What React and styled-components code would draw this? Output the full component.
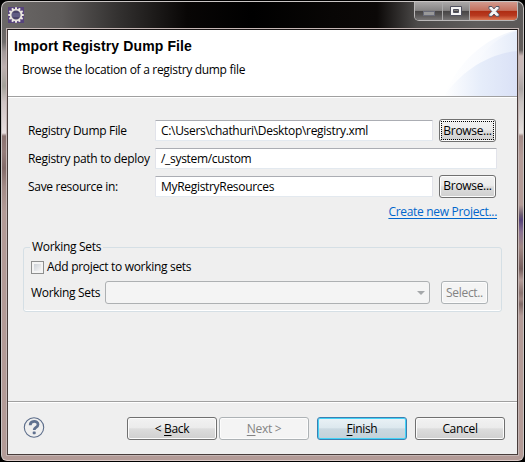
import React from 'react';
import styled, { createGlobalStyle, css } from 'styled-components';

const Global = createGlobalStyle`
  * { box-sizing: border-box; }
  html, body { margin: 0; background: #000; overflow: hidden; }
  body { font: 12px/16px "Open Sans", "Noto Sans", sans-serif; color: #000; }
  button, input { font: inherit; }
`;

const T = styled.span`
  display: inline-block;
  white-space: pre;
  letter-spacing: ${p => (p.$ls === undefined ? -0.31 : p.$ls)}px;
  u { text-decoration: underline; text-underline-offset: 2px; text-decoration-thickness: 1px; }
`;

const Frame = styled.div`
  width: 523px;
  height: 460px;
  margin-top: 1px;
  margin-left: 1px;
  padding: 0 5px 5px;
  display: flex;
  flex-direction: column;
  border: 1px solid #c9c5c4;
  border-bottom-color: #dccbc8;
  border-radius: 7px 7px 6px 6px;
  background:
    linear-gradient(90deg, #6b6867 0, #5d5a59 60px, #343231 115px, #080605 185px, #000 250px, #080605 330px, #0b0807 375px, #4c4a49 415px, #605d5c 475px, #5c5958 524px) 0 0 / 100% 28px no-repeat,
    linear-gradient(180deg, #5c5958 0, #6f6b6a 40px, #a39a9a 50px, #bdb0b0 65px, #a3a199 84px, #cfc4c4 100px, #e8dfdf 131px, #8b7371 134px, #957d7a 150px, #836b69 166px, #a38b87 185px, #b39b97 210px) 0 0 / 8px 100% no-repeat,
    linear-gradient(180deg, #5c5958 0, #625d5b 48px, #cbb8b6 54px, #c4b8b8 70px, #a9a3a2 87px, #c8c2c0 100px, #e4dedc 131px, #a38b87 134px, #b39b97 155px, #b39b97 203px, #6a5a70 213px, #56437a 218px, #8a7292 230px, #a08783 245px, #755e5d 267px, #b39b97 278px, #8a7370 291px, #a08783 297px, #7f6966 302px, #b39b97 314px);
`;

const TitleBar = styled.header`
  height: 27px;
  flex: none;
  display: flex;
  justify-content: space-between;
  align-items: flex-start;
  svg { display: block; }
`;

const AppIcon = styled.svg`
  margin: 5px 0 0 1px;
`;

const Controls = styled.div`
  display: flex;
  height: 19px;
  border: 1px solid #bab8b8;
  border-top: 0;
  border-radius: 0 0 5px 5px;
  overflow: hidden;
`;

const Control = styled.div`
  width: ${p => p.$w}px;
  display: grid;
  place-items: center;
  padding-top: ${p => p.$drop || 0}px;
  border-right: ${p => (p.$close ? 0 : 1)}px solid #aaa;
  background: ${p => p.$close
    ? 'linear-gradient(#d29a8e 0, #c4705d 47%, #ae2b12 50%, #b83a20 75%, #dd7955 100%)'
    : 'linear-gradient(#aaa8a8 0, #868484 47%, #474545 50%, #555353 70%, #777575 100%)'};
`;

const Client = styled.main`
  flex: 1;
  min-height: 0;
  display: flex;
  flex-direction: column;
  border: 1px solid #493d3b;
  border-top-color: #171313;
  outline: 1px solid #c4b6b4;
  background: #efefef;
`;

const Banner = styled.section`
  position: relative;
  height: 67px;
  flex: none;
  background: #fff;
  border-bottom: 1px solid #a0a0a0;
  box-shadow: 0 1px #fff;
  padding: 8px 0 0 6px;
`;

const Swoosh = styled.svg`
  position: absolute;
  right: 0;
  top: 0;
`;

const Title = styled.h1`
  margin: 0;
  font: bold 14px/16px "Liberation Sans", Arial, sans-serif;
`;

const Subtitle = styled.p`
  margin: 8px 0 0 8px;
`;

const Form = styled.section`
  display: grid;
  grid-template-columns: 127px 278px 57px;
  grid-template-rows: 28px 28px 28px 22px;
  align-items: center;
  margin: 19px 0 0 20px;
`;

const FormLabel = styled.label`
  padding-top: 1px;
`;

const Field = styled.div`
  height: 21px;
  display: flex;
  align-items: center;
  padding: 1px 0 0 5px;
  background: #fff;
  border: 1px solid #e2e3ea;
  border-top-color: #abadb3;
  border-bottom-color: #e3e9ef;
  border-radius: 1px;
  ${p => p.$wide && css`grid-column: 2 / 4; margin-right: -7px;`}
`;

const Button = styled.button`
  width: ${p => p.$w}px;
  height: 23px;
  padding: 0;
  display: grid;
  place-items: center;
  color: #000;
  border: 1px solid #707070;
  border-radius: 3px;
  background: linear-gradient(#f2f2f2 0, #ebebeb 48%, #dddddd 51%, #cfcfcf 100%);
  box-shadow: inset 0 0 0 1px #fcfcfc;
  ${p => p.$primary && css`
    border-color: #3c7fb1;
    background: linear-gradient(#eaf2f6 0, #dce8ee 48%, #cbd9e1 51%, #c3d1d9 100%);
    box-shadow: inset 0 0 0 1px #43d3f7;
  `}
  &:disabled { color: #838383; border-color: #adb2b5; background: #f4f4f4; }
`;

const FormButton = styled(Button)`
  margin-left: ${p => p.$gap || 6}px;
  ${p => p.$focused && css`
    span { border: 1px dotted #000; width: 53px; height: 19px; line-height: 17px; text-align: center; }
  `}
`;

const Link = styled.a`
  grid-column: 2 / 4;
  justify-self: end;
  margin-right: -7px;
  padding-top: 2px;
  color: #0066cc;
  span { text-decoration: underline; text-underline-offset: 2px; text-decoration-thickness: 1px; text-decoration-skip-ink: none; }
`;

const Group = styled.fieldset`
  width: 479px;
  height: 73px;
  margin: 17px 0 0 15px;
  padding: 1px 0 0 7px;
  border: 1px solid #d5dfe5;
  border-radius: 3px;
  box-shadow: inset 0 -1px #fff;
`;

const Legend = styled.legend`
  padding: 0 2px;
  margin-left: -1px;
  height: 16px;
`;

const Row = styled.div`
  display: flex;
  align-items: center;
  height: ${p => p.$h}px;
`;

const Checkbox = styled.span`
  width: 13px;
  height: 13px;
  flex: none;
  margin-right: 3px;
  border: 1px solid #8e8f8f;
  background: linear-gradient(135deg, #cdd2d8, #f5f5f5) 2px 2px / 7px 7px no-repeat padding-box, #f4f4f4;
`;

const Combo = styled.div`
  width: 325px;
  height: 23px;
  border: 1px solid #adb0b2;
  border-radius: 3px;
  background: #f4f4f4;
  display: flex;
  align-items: center;
  justify-content: flex-end;
  padding-right: 4px;
`;

const LabelCell = styled.div`
  width: 74px;
  flex: none;
  padding-top: 1px;
`;

const Footer = styled.footer`
  margin-top: auto;
  height: 53px;
  flex: none;
  border-top: 1px solid #a0a0a0;
  box-shadow: inset 0 1px #fff;
  display: flex;
  align-items: flex-start;
  padding: 15px 12px 0 15px;
`;

const Actions = styled.div`
  margin-left: auto;
  display: flex;
  gap: 8px;
`;

const Pair = styled.div`
  display: flex;
  gap: 2px;
`;

const teeth = Array.from({ length: 12 }, (_, i) => i * 30);

export default function App() {
  return (
    <>
      <Global />
      <Frame>
        <TitleBar>
          <AppIcon width="16" height="16" viewBox="0 0 16 16">
            <rect width="16" height="16" fill="#57447c" />
            {teeth.map(a => (
              <rect key={a} x="7" y="0.3" width="2" height="3" fill="#f0ece6" transform={`rotate(${a} 8 8)`} />
            ))}
            <circle cx="8" cy="8" r="5.4" fill="#4b4569" stroke="#e8e4de" strokeWidth="1.8" />
            <path d="M4 7h8M4 9h8" stroke="#7976a0" />
          </AppIcon>
          <Controls>
            <Control $w={28} $drop={5}>
              <svg width="12" height="5" viewBox="0 0 12 5"><rect x=".5" y=".5" width="11" height="4" fill="#999" stroke="#696b78" /></svg>
            </Control>
            <Control $w={27}>
              <svg width="12" height="10" viewBox="0 0 12 10"><path fillRule="evenodd" d="M.5.5h11v9H.5zM3.5 3.5v3h5v-3z" fill="#f4f4f4" stroke="#50515f" /></svg>
            </Control>
            <Control $w={47} $close>
              <svg width="12" height="11" viewBox="0 0 12 11"><path d="M1 .5h3l2 2.4L8 .5h3v2L8.3 5.4 11 8.3v2H8L6 8l-2 2.3H1v-2l2.7-2.9L1 2.5z" fill="#f5f5f5" stroke="#555767" /></svg>
            </Control>
          </Controls>
        </TitleBar>
        <Client>
          <Banner>
            <Swoosh width="73" height="66" viewBox="0 0 73 66">
              <defs>
                <linearGradient id="outer"><stop offset="0" stopColor="#fff" /><stop offset=".5" stopColor="#f4f7fd" /><stop offset="1" stopColor="#e4ebf9" /></linearGradient>
                <linearGradient id="inner"><stop offset="0" stopColor="#fff" /><stop offset=".5" stopColor="#e6edfa" /><stop offset="1" stopColor="#dae1f6" /></linearGradient>
              </defs>
              <path d="M0 66C12 36 38 8 73 0v66z" fill="url(#outer)" opacity=".6" />
              <path d="M18 66C28 34 46 8 73 1v65z" fill="url(#outer)" />
              <path d="M0 66C16 43 42 24 73 21v45z" fill="url(#inner)" />
            </Swoosh>
            <Title><T $ls={0.12}>Import Registry Dump File</T></Title>
            <Subtitle><T>Browse the location of a registry dump file</T></Subtitle>
          </Banner>
          <Form>
            <FormLabel><T>Registry Dump File</T></FormLabel>
            <Field><T>C:\Users\chathuri\Desktop\registry.xml</T></Field>
            <FormButton $w={57} $focused><T>Browse...</T></FormButton>
            <FormLabel><T>Registry path to deploy</T></FormLabel>
            <Field $wide><T>/_system/custom</T></Field>
            <FormLabel><T>Save resource in:</T></FormLabel>
            <Field><T>MyRegistryResources</T></Field>
            <FormButton $w={57}><T>Browse...</T></FormButton>
            <Link><T>Create new Project...</T></Link>
          </Form>
          <Group>
            <Legend><T>Working Sets</T></Legend>
            <Row $h={22}><Checkbox /><T>Add project to working sets</T></Row>
            <Row $h={29}>
              <LabelCell><T>Working Sets</T></LabelCell>
              <Combo><svg width="8" height="4" viewBox="0 0 8 4"><path d="M0 0h8L4 4z" fill="#a5a8aa" /></svg></Combo>
              <FormButton $w={47} $gap={11} disabled><T>Select..</T></FormButton>
            </Row>
          </Group>
          <Footer>
            <svg width="22" height="22" viewBox="0 0 22 22" fill="none">
              <circle cx="11" cy="10.5" r="9.7" stroke="#5c6d8a" strokeWidth="1.1" />
              <path d="M7.2 8.2c0-5 7.8-5 7.8-.8 0 3-3.8 3-3.8 5.6" stroke="#60718f" strokeWidth="2.8" />
              <rect x="9.7" y="14.4" width="3" height="2.8" rx=".7" fill="#60718f" />
            </svg>
            <Actions>
              <Pair>
                <Button $w={90}><T>{'< '}<u>B</u>ack</T></Button>
                <Button $w={90} disabled><T><u>N</u>ext &gt;</T></Button>
              </Pair>
              <Button $w={90} $primary><T><u>F</u>inish</T></Button>
              <Button $w={90}><T>Cancel</T></Button>
            </Actions>
          </Footer>
        </Client>
      </Frame>
    </>
  );
}
